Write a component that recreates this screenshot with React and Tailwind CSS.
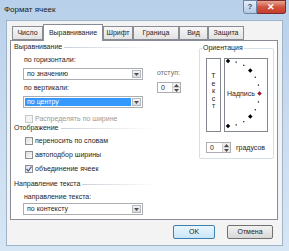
import React from 'react';

const tabs = [
  { label: 'Число', w: 'w-[31px]' },
  { label: 'Выравнивание', w: 'w-[60px]', active: true },
  { label: 'Шрифт', w: 'w-[30px]' },
  { label: 'Граница', w: 'w-[46px]' },
  { label: 'Вид', w: 'w-[29px]' },
  { label: 'Защита', w: 'w-[36px]' },
];

function Arrow({ up }) {
  return (
    <svg width="5" height="3" viewBox="0 0 5 3">
      <path d={up ? 'M0 3 L2.5 0 L5 3 Z' : 'M0 0 L5 0 L2.5 3 Z'} fill="#4d4d4d" />
    </svg>
  );
}

function Select({ value, selected, h = 'h-[12px]' }) {
  return (
    <div className={`w-[120px] ${h} ml-[12px] border border-[#abadb3] bg-white flex`}>
      <div
        className={
          selected
            ? 'flex-1 m-[1px] pl-[2px] bg-[#3399ff] text-white flex items-center'
            : 'flex-1 pl-[3px] flex items-center'
        }
      >
        {value}
      </div>
      <div className="w-[9px] my-[1px] mr-[1px] border border-[#b5b9c0] bg-gradient-to-b from-[#f3f3f3] to-[#dadada] flex items-center justify-center">
        <Arrow />
      </div>
    </div>
  );
}

function Check({ label, checked, disabled }) {
  return (
    <div className="flex items-center h-[8px] ml-[14px] gap-[2px]">
      <div
        className={`w-[8px] h-[8px] border flex items-center justify-center ${
          disabled ? 'border-[#c8c8c8] bg-[#f4f4f4]' : 'border-[#8e8f8f] bg-gradient-to-br from-[#e0e0e0] to-[#fbfbfb]'
        }`}
      >
        {checked && (
          <svg width="6" height="6" viewBox="0 0 6 6">
            <path d="M0.5 3 L2.3 5 L5.5 0.6" stroke="#4a5f97" strokeWidth="1.2" fill="none" />
          </svg>
        )}
      </div>
      <span className={disabled ? 'text-[#9a9a9a]' : ''}>{label}</span>
    </div>
  );
}

function GroupLabel({ children, className = '' }) {
  return (
    <div className={`flex items-center h-[8px] ml-[3px] gap-[2px] ${className}`}>
      <span>{children}</span>
      <div className="flex-1 h-px bg-gradient-to-r from-[#c9d1d9] to-transparent" />
    </div>
  );
}

function Spin({ w }) {
  return (
    <div className={`${w} h-[11px] border border-[#abadb3] bg-white flex`}>
      <div className="flex-1 pl-[3px] flex items-center">0</div>
      <div className="w-[8px] flex flex-col border-l border-[#d0d0d0] bg-[#eeeeee]">
        <div className="flex-1 flex items-center justify-center border-b border-[#d0d0d0]">
          <Arrow up />
        </div>
        <div className="flex-1 flex items-center justify-center">
          <Arrow />
        </div>
      </div>
    </div>
  );
}

function Dial() {
  const pts = [];
  for (let a = -90; a <= 90; a += 15) {
    const r = (a * Math.PI) / 180;
    pts.push({ a, x: 3 + 31.5 * Math.cos(r), y: 34.5 + 32.5 * Math.sin(r) });
  }
  return (
    <svg width="42" height="72" viewBox="0 0 42 72">
      {pts.map((p) =>
        p.a % 45 === 0 ? (
          <rect
            key={p.a}
            x={p.x - 1.6}
            y={p.y - 1.6}
            width="3.2"
            height="3.2"
            transform={`rotate(45 ${p.x} ${p.y})`}
            fill={p.a === 0 ? '#a0182a' : '#000'}
          />
        ) : (
          <rect key={p.a} x={p.x - 0.6} y={p.y - 0.6} width="1.2" height="1.2" fill="#000" />
        )
      )}
      <text x="2" y="37" fontSize="7" fontFamily="Liberation Sans, sans-serif" fill="#1e1e1e">
        Надпись
      </text>
    </svg>
  );
}

export default function App() {
  return (
    <div className="w-[289px] h-[251px] overflow-hidden flex flex-col bg-gradient-to-b from-[#b8d0ea] via-[#c9dcf0] to-[#d7e6f5] font-['Liberation_Sans',sans-serif] text-[7px] leading-[8px] text-[#1e1e1e]">
      {/* title bar */}
      <div className="h-[20px] flex items-start justify-between">
        <span className="pl-[4px] pt-[6px] text-[8px] text-[#1a1a1a]">Формат ячеек</span>
        <div className="flex mr-[3px]">
          <div className="w-[14px] h-[14px] border border-[#6a85a8] rounded-bl-[3px] bg-gradient-to-b from-[#e4eef8] to-[#b4c9e0] flex items-center justify-center text-[8px] text-[#2e4a6e] font-bold">
            ?
          </div>
          <div className="w-[29px] h-[14px] border border-l-0 border-[#7a2b2b] rounded-br-[3px] bg-gradient-to-b from-[#e8a493] via-[#d0533e] to-[#c73d2a] flex items-center justify-center text-[9px] text-white font-bold">
            ✕
          </div>
        </div>
      </div>

      {/* client area */}
      <div className="flex-1 mx-[6px] mb-[5px] border border-[#9fb3c9] bg-[#f3f3f3] flex flex-col pl-[3px] pr-[4px]">
        {/* tabs */}
        <div className="h-[19px] flex items-end pl-[2px] relative z-10">
          {tabs.map((t) =>
            t.active ? (
              <div
                key={t.label}
                className={`${t.w} h-[17px] -mb-px border border-b-0 border-[#898c95] bg-white flex items-center justify-center`}
              >
                {t.label}
              </div>
            ) : (
              <div
                key={t.label}
                className={`${t.w} h-[14px] border border-[#898c95] bg-gradient-to-b from-[#f7f7f7] to-[#e2e2e2] flex items-center justify-center`}
              >
                {t.label}
              </div>
            )
          )}
        </div>

        {/* panel */}
        <div className="h-[180px] border border-[#898c95] bg-white flex">
          {/* left column */}
          <div className="w-[144px] flex flex-col">
            <GroupLabel className="mt-[2px]">Выравнивание</GroupLabel>
            <div className="ml-[13px] mt-[5px] h-[8px]">по горизонтали:</div>
            <div className="mt-[4px]">
              <Select value="по значению" />
            </div>
            <div className="ml-[13px] mt-[4px] h-[8px]">по вертикали:</div>
            <div className="mt-[4px]">
              <Select value="по центру" selected />
            </div>
            <div className="mt-[7px]">
              <Check label="Распределять по ширине" disabled />
            </div>
            <GroupLabel className="mt-[1px]">Отображение</GroupLabel>
            <div className="mt-[5px]">
              <Check label="переносить по словам" />
            </div>
            <div className="mt-[6px]">
              <Check label="автоподбор ширины" />
            </div>
            <div className="mt-[6px]">
              <Check label="объединение ячеек" checked />
            </div>
            <GroupLabel className="mt-[7px]">Направление текста</GroupLabel>
            <div className="ml-[13px] mt-[5px] h-[8px]">направление текста:</div>
            <div className="mt-[2px]">
              <Select value="по контексту" h="h-[12px]" />
            </div>
          </div>

          {/* indent column */}
          <div className="w-[44px] flex flex-col pl-[2px] pt-[28px]">
            <span className="text-[#6d6d6d]">отступ:</span>
            <div className="mt-[5px]">
              <Spin w="w-[24px]" />
            </div>
          </div>

          {/* orientation group */}
          <div className="w-[75px] h-[111px] mt-[7px] border border-[#d5dfe5] rounded-[2px] flex flex-col pl-[6px] relative">
            <span className="absolute -top-[5px] left-[2px] bg-white px-px">Ориентация</span>
            <div className="flex gap-[3px] mt-[9px]">
              <div className="w-[15px] h-[74px] border border-[#828790] flex flex-col items-center pt-[13px] leading-[7.5px]">
                <span>Т</span>
                <span>е</span>
                <span>к</span>
                <span>с</span>
                <span>т</span>
              </div>
              <div className="w-[44px] h-[74px] border border-[#828790] bg-white">
                <Dial />
              </div>
            </div>
            <div className="flex items-center mt-[10px] gap-[5px]">
              <Spin w="w-[25px]" />
              <span>градусов</span>
            </div>
          </div>
        </div>

        {/* buttons */}
        <div className="flex justify-end gap-[12px] pr-[5px] mt-[5px]">
          <div className="w-[42px] h-[14px] rounded-[2px] border border-[#3c7fb1] bg-gradient-to-b from-[#eaf6fd] to-[#c8e6f8] flex items-center justify-center">
            OK
          </div>
          <div className="w-[46px] h-[14px] rounded-[2px] border border-[#707070] bg-gradient-to-b from-[#f2f2f2] to-[#d8d8d8] flex items-center justify-center">
            Отмена
          </div>
        </div>
      </div>
    </div>
  );
}
